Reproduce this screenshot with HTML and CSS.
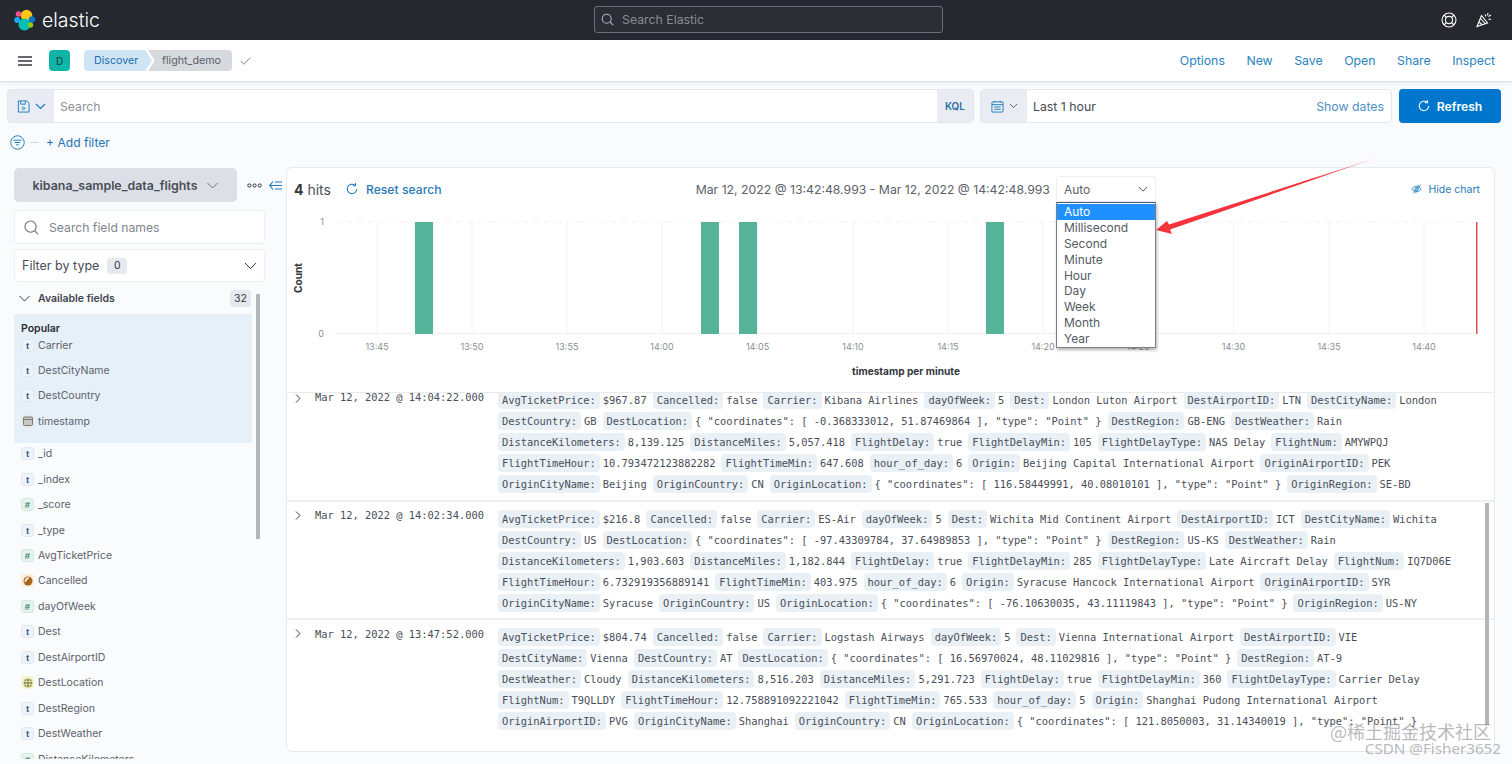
FILE: index.html
```html
<!DOCTYPE html>
<html lang="en">
<head>
<meta charset="utf-8">
<title>Discover - Elastic</title>
<link rel="stylesheet" href="styles.css">
</head>
<body>
<header class="topbar">
  <div class="brand">
    <svg class="brand-logo" width="22" height="22" viewBox="0 0 22 22">
      <circle cx="12.5" cy="6.5" r="5.8" fill="#fec514"/>
      <circle cx="10.5" cy="15.5" r="6" fill="#00bfb3"/>
      <circle cx="4.5" cy="5" r="2.8" fill="#f04e98"/>
      <circle cx="3.2" cy="11" r="3" fill="#1ba9f5"/>
      <circle cx="18" cy="10.5" r="3.2" fill="#0077cc"/>
      <circle cx="16.5" cy="16" r="2.7" fill="#93c90e"/>
    </svg>
    <span class="brand-name">elastic</span>
  </div>
  <div class="global-search">
    <svg width="13" height="13" viewBox="0 0 16 16" fill="none" stroke="#b4b8c0" stroke-width="1.3"><circle cx="7" cy="7" r="5.5"/><path d="M11 11l4 4"/></svg>
    <span>Search Elastic</span>
  </div>
  <div class="top-icons">
    <svg width="16" height="16" viewBox="0 0 16 16" fill="none" stroke="#fff" stroke-width="1.1"><circle cx="8" cy="8" r="7"/><circle cx="8" cy="8" r="3.6"/><path d="M3 3l2.5 2.5M13 3l-2.5 2.5M3 13l2.5-2.5M13 13l-2.5-2.5"/></svg>
    <svg width="16" height="16" viewBox="0 0 16 16" fill="none" stroke="#fff" stroke-width="1.1"><path d="M1 14.5L5.5 3.5l6 7.5zM3 10l3.5 3M4.500 6.500l5 5.500"/><path d="M9 2.500l1 2M12 1l-.5 2.500M15 3l-2.500 1.500M15 7.500l-2.500-.5"/></svg>
  </div>
</header>

<nav class="appbar">
  <svg class="menu-icon" width="14" height="10" viewBox="0 0 14 10"><path d="M0 1h14M0 5h14M0 9h14" stroke="#343741" stroke-width="1.500"/></svg>
  <span class="avatar">D</span>
  <div class="crumbs">
    <span class="crumb crumb-first">Discover</span>
    <span class="crumb crumb-last">flight_demo</span>
  </div>
  <svg class="check-icon" width="11" height="8" viewBox="0 0 11 8" fill="none"><path d="M.5 4l3.200 3L10.500.5" stroke="#808690"/></svg>
  <div class="app-links">
    <a>Options</a><a>New</a><a>Save</a><a>Open</a><a>Share</a><a>Inspect</a>
  </div>
</nav>

<section class="querybar">
  <div class="control query-input">
    <div class="prepend prepend-save">
      <svg width="13" height="13" viewBox="0 0 14 14" fill="none" stroke="#1a7abf"><path d="M1.500 1h9l2.500 2.500v9.500h-11.500z"/><path d="M4 1v3.500h5V1"/><circle cx="7" cy="9" r="1.300"/></svg>
      <svg width="11" height="7" viewBox="0 0 11 7" fill="none" stroke="#1a7abf" stroke-width="1.200"><path d="M1 1l4.500 4.500L10 1"/></svg>
    </div>
    <span class="placeholder">Search</span>
    <span class="kql">KQL</span>
  </div>
  <div class="control date-input">
    <div class="prepend prepend-date">
      <svg width="13" height="13" viewBox="0 0 14 14" fill="none" stroke="#1a7abf"><rect x="1" y="2" width="12" height="11" rx="1"/><path d="M1 5h12M4 1v2M10 1v2M3.500 7.500h7M3.500 10h7"/></svg>
      <svg width="9" height="6" viewBox="0 0 11 7" fill="none" stroke="#5a6069" stroke-width="1.200"><path d="M1 1l4.500 4.500L10 1"/></svg>
    </div>
    <span class="date-text">Last 1 hour</span>
    <span class="show-dates">Show dates</span>
  </div>
  <button class="refresh">
    <svg width="12" height="12" viewBox="0 0 14 14" fill="none" stroke="#fff" stroke-width="1.200"><path d="M12.500 7a5.500 5.500 0 1 1-2-4.300"/><path d="M11 0v3.200H8"/></svg>
    Refresh
  </button>
</section>

<section class="filterbar">
  <svg width="15" height="15" viewBox="0 0 16 16" fill="none" stroke="#1a7abf"><circle cx="8" cy="8" r="7.200"/><path d="M3.500 5.500h9M5 8h6M6.500 10.500h3"/></svg>
  <span class="filter-dash"></span>
  <a class="add-filter">+ Add filter</a>
</section>

<main class="layout">
  <aside class="sidebar">
    <div class="index-row">
      <button class="index-btn">kibana_sample_data_flights
        <svg width="11" height="7" viewBox="0 0 11 7" fill="none" stroke="#69707d"><path d="M.5 1l5 5 5-5"/></svg>
      </button>
      <svg class="dots" width="15" height="5" viewBox="0 0 15 5" fill="none" stroke="#343741"><circle cx="2.300" cy="2.500" r="1.600"/><circle cx="7.500" cy="2.500" r="1.600"/><circle cx="12.700" cy="2.500" r="1.600"/></svg>
      <svg class="collapse" width="13" height="9" viewBox="0 0 13 9" fill="none" stroke="#1a7abf" stroke-width="1.200"><path d="M4 .5L.8 4.500 4 8.500M1 4.500h12M6 1h7M6 8h7"/></svg>
    </div>
    <div class="field-search">
      <svg width="15" height="15" viewBox="0 0 16 16" fill="none" stroke="#69707d" stroke-width="1.200"><circle cx="7" cy="7" r="6"/><path d="M11.500 11.500l3.500 3.500"/></svg>
      <span>Search field names</span>
    </div>
    <div class="type-filter">
      <span>Filter by type</span>
      <span class="badge">0</span>
      <svg width="13" height="8" viewBox="0 0 13 8" fill="none" stroke="#343741"><path d="M1 1l5.500 5.500L12 1"/></svg>
    </div>
    <div class="avail-head">
      <svg width="11" height="7" viewBox="0 0 11 7" fill="none" stroke="#343741"><path d="M.5 1l5 5 5-5"/></svg>
      <strong>Available fields</strong>
      <span class="badge badge-count">32</span>
    </div>
    <div class="popular">
      <div class="popular-title">Popular</div>
      <div class="field"><i class="tok tok-t">t</i>Carrier</div>
      <div class="field"><i class="tok tok-t">t</i>DestCityName</div>
      <div class="field"><i class="tok tok-t">t</i>DestCountry</div>
      <div class="field"><i class="tok tok-date"><svg width="10" height="10" viewBox="0 0 10 10"><rect x=".5" y="1" width="9" height="8.500" rx="1" fill="#c8c8c4" stroke="#7a7a76"/><path d="M.5 3.500h9" stroke="#7a7a76"/></svg></i>timestamp</div>
    </div>
    <div class="fields">
      <div class="field"><i class="tok tok-t">t</i>_id</div>
      <div class="field"><i class="tok tok-t">t</i>_index</div>
      <div class="field"><i class="tok tok-n">#</i>_score</div>
      <div class="field"><i class="tok tok-t">t</i>_type</div>
      <div class="field"><i class="tok tok-n">#</i>AvgTicketPrice</div>
      <div class="field"><i class="tok tok-bool"><svg width="10" height="10" viewBox="0 0 10 10"><circle cx="5" cy="5" r="4.500" fill="#a6641f"/><path d="M1.800 6.800L6.500 1.500A4 4 0 0 0 1.800 6.800z" fill="#fbeedd"/></svg></i>Cancelled</div>
      <div class="field"><i class="tok tok-n">#</i>dayOfWeek</div>
      <div class="field"><i class="tok tok-t">t</i>Dest</div>
      <div class="field"><i class="tok tok-t">t</i>DestAirportID</div>
      <div class="field"><i class="tok tok-geo"><svg width="10" height="10" viewBox="0 0 10 10" fill="#8a8a3c" stroke="#f6f3d6" stroke-width=".7"><circle cx="5" cy="5" r="4.800"/><ellipse cx="5" cy="5" rx="2" ry="4.800"/><path d="M0 3.400h10M0 6.600h10" fill="none"/></svg></i>DestLocation</div>
      <div class="field"><i class="tok tok-t">t</i>DestRegion</div>
      <div class="field"><i class="tok tok-t">t</i>DestWeather</div>
      <div class="field"><i class="tok tok-n">#</i>DistanceKilometers</div>
    </div>
    <span class="side-scroll"></span>
  </aside>

  <section class="panel">
    <div class="hist-head">
      <div class="hits">
        <span class="hits-count"><b>4</b> hits</span>
        <a class="reset">
          <svg width="12" height="12" viewBox="0 0 14 14" fill="none" stroke="#1a7abf" stroke-width="1.200"><path d="M12.500 7a5.500 5.500 0 1 1-2-4.300"/><path d="M11 0v3.200H8"/></svg>
          Reset search
        </a>
      </div>
      <div class="range">
        <span>Mar 12, 2022 @ 13:42:48.993 - Mar 12, 2022 @ 14:42:48.993</span>
        <div class="select">
          <span>Auto</span>
          <svg width="10" height="6" viewBox="0 0 11 7" fill="none" stroke="#343741"><path d="M.5 1l5 5 5-5"/></svg>
          <ul class="options">
            <li class="on">Auto</li><li>Millisecond</li><li>Second</li><li>Minute</li><li>Hour</li><li>Day</li><li>Week</li><li>Month</li><li>Year</li>
          </ul>
        </div>
      </div>
      <a class="hide-chart">
        <svg width="11" height="10" viewBox="0 0 14 12" fill="none" stroke="#1a7abf"><path d="M1 6c3-4.500 9-4.500 12 0-3 4.500-9 4.500-12 0z"/><circle cx="7" cy="6" r="2"/><path d="M3 11.500L10 .5M5.500 11.500L12.500 .5"/></svg>
        Hide chart
      </a>
    </div>

    <svg class="chart" width="1207" height="180" viewBox="287 212 1207 180">
      <g class="grid">
        <path d="M335 222H1477" stroke-dasharray="6 5"/>
        <path d="M335 333.500H1477"/>
        <path d="M377 222V334M472 222V334M567 222V334M662 222V334M757.500 222V334M853 222V334M948 222V334M1043 222V334M1138 222V334M1233.500 222V334M1329 222V334M1424 222V334"/>
      </g>
      <g fill="#54b399">
        <rect x="415" y="222" width="18" height="112"/>
        <rect x="701" y="222" width="18" height="112"/>
        <rect x="739" y="222" width="18" height="112"/>
        <rect x="986" y="222" width="18" height="112"/>
      </g>
      <rect x="1476" y="222" width="1.500" height="112" fill="#d9534f"/>
      <g class="ticks">
        <text x="324" y="225">1</text><text x="324" y="337">0</text>
      </g>
      <g class="ticks ticks-x">
        <text x="377" y="350">13:45</text><text x="472" y="350">13:50</text><text x="567" y="350">13:55</text><text x="662" y="350">14:00</text><text x="757.500" y="350">14:05</text><text x="853" y="350">14:10</text><text x="948" y="350">14:15</text><text x="1043" y="350">14:20</text><text x="1138" y="350">14:25</text><text x="1233.500" y="350">14:30</text><text x="1329" y="350">14:35</text><text x="1424" y="350">14:40</text>
      </g>
      <text class="axis-title" x="906" y="375">timestamp per minute</text>
      <text class="axis-title" transform="translate(302 278) rotate(-90)">Count</text>
    </svg>

    <div class="docs">
      <article class="doc doc-a">
        <svg class="doc-toggle" width="6" height="9" viewBox="0 0 6 9" fill="none" stroke="#343741"><path d="M1 .5l4 4-4 4"/></svg>
        <div class="doc-time">Mar 12, 2022 @ 14:04:22.000</div>
        <div class="doc-src">
          <p><b>AvgTicketPrice:</b><span>$967.87</span><b>Cancelled:</b><span>false</span><b>Carrier:</b><span>Kibana Airlines</span><b>dayOfWeek:</b><span>5</span><b>Dest:</b><span>London Luton Airport</span><b>DestAirportID:</b><span>LTN</span><b>DestCityName:</b><span>London</span></p>
          <p><b>DestCountry:</b><span>GB</span><b>DestLocation:</b><span>{ "coordinates": [ -0.368333012, 51.87469864 ], "type": "Point" }</span><b>DestRegion:</b><span>GB-ENG</span><b>DestWeather:</b><span>Rain</span></p>
          <p><b>DistanceKilometers:</b><span>8,139.125</span><b>DistanceMiles:</b><span>5,057.418</span><b>FlightDelay:</b><span>true</span><b>FlightDelayMin:</b><span>105</span><b>FlightDelayType:</b><span>NAS Delay</span><b>FlightNum:</b><span>AMYWPQJ</span></p>
          <p><b>FlightTimeHour:</b><span>10.793472123882282</span><b>FlightTimeMin:</b><span>647.608</span><b>hour_of_day:</b><span>6</span><b>Origin:</b><span>Beijing Capital International Airport</span><b>OriginAirportID:</b><span>PEK</span></p>
          <p><b>OriginCityName:</b><span>Beijing</span><b>OriginCountry:</b><span>CN</span><b>OriginLocation:</b><span>{ "coordinates": [ 116.58449991, 40.08010101 ], "type": "Point" }</span><b>OriginRegion:</b><span>SE-BD</span></p>
        </div>
      </article>
      <article class="doc doc-b">
        <svg class="doc-toggle" width="6" height="9" viewBox="0 0 6 9" fill="none" stroke="#343741"><path d="M1 .5l4 4-4 4"/></svg>
        <div class="doc-time">Mar 12, 2022 @ 14:02:34.000</div>
        <div class="doc-src">
          <p><b>AvgTicketPrice:</b><span>$216.8</span><b>Cancelled:</b><span>false</span><b>Carrier:</b><span>ES-Air</span><b>dayOfWeek:</b><span>5</span><b>Dest:</b><span>Wichita Mid Continent Airport</span><b>DestAirportID:</b><span>ICT</span><b>DestCityName:</b><span>Wichita</span></p>
          <p><b>DestCountry:</b><span>US</span><b>DestLocation:</b><span>{ "coordinates": [ -97.43309784, 37.64989853 ], "type": "Point" }</span><b>DestRegion:</b><span>US-KS</span><b>DestWeather:</b><span>Rain</span></p>
          <p><b>DistanceKilometers:</b><span>1,903.603</span><b>DistanceMiles:</b><span>1,182.844</span><b>FlightDelay:</b><span>true</span><b>FlightDelayMin:</b><span>285</span><b>FlightDelayType:</b><span>Late Aircraft Delay</span><b>FlightNum:</b><span>IQ7D06E</span></p>
          <p><b>FlightTimeHour:</b><span>6.732919356889141</span><b>FlightTimeMin:</b><span>403.975</span><b>hour_of_day:</b><span>6</span><b>Origin:</b><span>Syracuse Hancock International Airport</span><b>OriginAirportID:</b><span>SYR</span></p>
          <p><b>OriginCityName:</b><span>Syracuse</span><b>OriginCountry:</b><span>US</span><b>OriginLocation:</b><span>{ "coordinates": [ -76.10630035, 43.11119843 ], "type": "Point" }</span><b>OriginRegion:</b><span>US-NY</span></p>
        </div>
      </article>
      <article class="doc doc-c">
        <svg class="doc-toggle" width="6" height="9" viewBox="0 0 6 9" fill="none" stroke="#343741"><path d="M1 .5l4 4-4 4"/></svg>
        <div class="doc-time">Mar 12, 2022 @ 13:47:52.000</div>
        <div class="doc-src">
          <p><b>AvgTicketPrice:</b><span>$804.74</span><b>Cancelled:</b><span>false</span><b>Carrier:</b><span>Logstash Airways</span><b>dayOfWeek:</b><span>5</span><b>Dest:</b><span>Vienna International Airport</span><b>DestAirportID:</b><span>VIE</span></p>
          <p><b>DestCityName:</b><span>Vienna</span><b>DestCountry:</b><span>AT</span><b>DestLocation:</b><span>{ "coordinates": [ 16.56970024, 48.11029816 ], "type": "Point" }</span><b>DestRegion:</b><span>AT-9</span></p>
          <p><b>DestWeather:</b><span>Cloudy</span><b>DistanceKilometers:</b><span>8,516.203</span><b>DistanceMiles:</b><span>5,291.723</span><b>FlightDelay:</b><span>true</span><b>FlightDelayMin:</b><span>360</span><b>FlightDelayType:</b><span>Carrier Delay</span></p>
          <p><b>FlightNum:</b><span>T9QLLDY</span><b>FlightTimeHour:</b><span>12.758891092221042</span><b>FlightTimeMin:</b><span>765.533</span><b>hour_of_day:</b><span>5</span><b>Origin:</b><span>Shanghai Pudong International Airport</span></p>
          <p><b>OriginAirportID:</b><span>PVG</span><b>OriginCityName:</b><span>Shanghai</span><b>OriginCountry:</b><span>CN</span><b>OriginLocation:</b><span>{ "coordinates": [ 121.8050003, 31.14340019 ], "type": "Point" }</span></p>
        </div>
      </article>
    </div>
    <span class="doc-scroll"></span>
  </section>
</main>

<svg class="arrow" width="240" height="90" viewBox="1150 150 240 90">
  <defs><linearGradient id="arrowFade" x1="1" y1="0" x2="0" y2="1"><stop offset="0" stop-color="#f4333c" stop-opacity=".1"/><stop offset=".3" stop-color="#f4333c"/></linearGradient></defs>
  <polygon fill="url(#arrowFade)" points="1382,156 1170,229.500 1172,234 1156,230 1167,221 1169,224.500"/>
</svg>

<div class="watermark">
  <div class="wm-cn">@稀土掘金技术社区</div>
  <div class="wm-en">CSDN @Fisher3652</div>
</div>
</body>
</html>
```
FILE: styles.css
```css
* { box-sizing: border-box; }
html, body { margin: 0; height: 764px; overflow: hidden; }
body {
  position: relative;
  background: #fafbfd;
  color: #343741;
  font-family: Inter, "Noto Sans", sans-serif;
  font-size: 13px;
}
a { color: #1a7abf; }

/* top bar */
.topbar {
  height: 40px;
  background: #25282f;
  display: grid;
  grid-template-columns: 580px 349px 1fr;
  align-items: center;
  padding: 0 20px 0 14px;
}
.brand { display: flex; align-items: center; gap: 6px; }
.brand-logo { flex: none; }
.brand-name { color: #fff; font-size: 19.500px; font-weight: 300; }
.global-search {
  height: 27px;
  border: 1px solid #6a6e76;
  border-radius: 3px;
  background: #2b2e35;
  display: flex;
  align-items: center;
  gap: 8px;
  padding: 0 6px;
  color: #888c94;
  font-size: 12.300px;
  position: relative;
  top: -1px;
}
.top-icons { display: flex; justify-content: flex-end; gap: 19px; }

/* app bar */
.appbar {
  height: 42px;
  background: #fff;
  border-bottom: 1px solid #dcdfe4;
  box-shadow: 0 1px 3px rgba(0,0,0,.08);
  display: flex;
  align-items: center;
  padding: 0 17px 0 18px;
}
.avatar {
  width: 21px; height: 21px;
  margin-left: 17px;
  border-radius: 4px;
  background: #0fb5a8;
  color: #124e4a;
  font-size: 10px;
  font-weight: 500;
  display: flex; align-items: center; justify-content: center;
}
.crumbs { display: flex; margin-left: 14px; }
.crumb {
  height: 21px;
  display: flex; align-items: center;
  font-size: 10.700px;
}
.crumb-first {
  width: 68px;
  padding-left: 10px;
  background: #cfe5f5;
  color: #1a6fae;
  border-radius: 4px 0 0 4px;
  clip-path: polygon(0 0, 90% 0, 100% 50%, 90% 100%, 0 100%);
  position: relative;
  z-index: 1;
}
.crumb-last {
  width: 84px;
  margin-left: -4px;
  padding-left: 14px;
  background: #d6d9de;
  color: #5a5f68;
  border-radius: 0 4px 4px 0;
  clip-path: polygon(0 0, 100% 0, 100% 100%, 0 100%, 8% 50%);
}
.check-icon { margin-left: 8px; }
.app-links { margin-left: auto; display: flex; gap: 21.500px; font-size: 12.300px; }
.app-links a { color: #2a82c2; }

/* query bar */
.querybar {
  margin-top: 7px;
  height: 34px;
  padding: 0 11px 0 7px;
  display: flex;
}
.control {
  background: #fff;
  border: 1px solid #e3e6ec;
  border-radius: 4px;
  display: flex;
  align-items: center;
  overflow: hidden;
}
.query-input { width: 967px; }
.date-input { width: 412px; margin-left: 6px; }
.prepend {
  height: 100%;
  background: #e9edf3;
  display: flex;
  align-items: center;
  justify-content: center;
  gap: 5px;
  flex: none;
  width: 46px;
}
.placeholder { margin-left: 6px; color: #8c9099; font-size: 12.200px; }
.kql {
  margin-left: auto;
  width: 36px;
  height: 100%;
  background: #e9edf3;
  color: #2a72a8;
  font-size: 10px;
  font-weight: 600;
  display: flex; align-items: center; justify-content: center;
}
.date-text { margin-left: 6px; font-size: 12.300px; color: #454a54; }
.show-dates { margin-left: auto; margin-right: 7px; color: #4f8fc4; font-size: 12.300px; }
.refresh {
  width: 102px;
  margin-left: 7px;
  background: #0077cc;
  border: 0;
  border-radius: 4px;
  color: #fff;
  font: 600 12.200px Inter, sans-serif;
  display: flex; align-items: center; justify-content: center;
  gap: 7px;
}

/* filter bar */
.filterbar {
  height: 38px;
  padding-left: 10px;
  display: flex;
  align-items: center;
}
.filter-dash { width: 8px; height: 1px; margin-left: 5px; background: #d3d6db; }
.add-filter { margin-left: 8px; font-size: 12.100px; color: #2274b5; }

/* layout */
.layout {
  margin-top: 6px;
  display: flex;
  align-items: flex-start;
}
.sidebar {
  position: relative;
  width: 286px;
  height: 592px;
  padding: 1px 21px 0 14px;
  overflow: hidden;
  flex: none;
}
.index-row { display: flex; align-items: center; width: 270px; }
.index-btn {
  width: 223px; height: 34px;
  border: 0;
  border-radius: 5px;
  background: #dcdfe5;
  color: #4a4e58;
  font: 600 12.400px Inter, sans-serif;
  display: flex; align-items: center; justify-content: center;
  gap: 10px;
}
.dots { margin-left: 10px; }
.collapse { margin-left: 7px; }
.field-search, .type-filter {
  background: #fff;
  border: 1px solid #eceef2;
  border-radius: 4px;
  display: flex;
  align-items: center;
  font-size: 12.500px;
}
.field-search {
  height: 34px;
  margin-top: 8px;
  padding-left: 9px;
  gap: 10px;
  color: #80858e;
  font-size: 12.200px;
}
.type-filter {
  height: 33px;
  margin-top: 5px;
  padding: 0 7px;
  color: #4a4e58;
}
.type-filter svg { margin-left: auto; }
.badge {
  background: #e6e9ef;
  border-radius: 3px;
  font-size: 10.500px;
  color: #343741;
  display: flex; align-items: center; justify-content: center;
}
.type-filter .badge { width: 20px; height: 16px; margin-left: 8px; }
.avail-head {
  height: 17px;
  margin-top: 8px;
  padding-left: 5px;
  display: flex;
  align-items: center;
  font-size: 10.500px;
  width: 237px;
}
.avail-head strong { margin-left: 8px; font-weight: 600; color: #40444d; }
.badge-count { margin-left: auto; width: 21px; height: 17px; }
.popular {
  width: 238px;
  margin-top: 7px;
  padding: 8px 0 3px 7px;
  background: #e6f0f9;
}
.popular-title {
  height: 14px;
  margin-bottom: 2px;
  font-size: 10.500px;
  font-weight: 600;
  line-height: 14px;
  color: #2b2e35;
}
.fields { margin-top: 4px; padding-left: 7px; }
.field {
  height: 14px;
  margin-bottom: 11.450px;
  display: flex;
  align-items: center;
  gap: 4px;
  font-size: 10.500px;
  color: #5c616b;
  white-space: nowrap;
}
.tok {
  flex: none;
  width: 13px; height: 13px;
  border-radius: 3px;
  display: flex; align-items: center; justify-content: center;
  font: 700 9.500px "Liberation Sans", sans-serif;
}
.tok-t { background: #eef3fa; border: 1px solid #dfe8f3; color: #2d5c88; }
.tok-n { background: #e4f3ee; border: 1px solid #d4e9e2; color: #2e7d68; }
.tok-bool { background: #fbeedd; }
.tok-geo { background: #f6f3d6; }
.tok-date { background: #e9e9e6; }
.side-scroll {
  position: absolute;
  left: 256px; top: 127px;
  width: 4px; height: 245px;
  background: #b3b5ba;
}

/* panel */
.panel {
  position: relative;
  width: 1209px;
  height: 585px;
  background: #fff;
  border: 1px solid #e6e9ee;
  border-radius: 6px;
  overflow: hidden;
}
.hist-head {
  height: 44px;
  padding: 0 14px 2px 7px;
  display: flex;
  align-items: center;
  justify-content: space-between;
  position: relative;
  z-index: 2;
}
.hits { display: flex; align-items: center; gap: 15px; }
.hits-count { font-size: 14px; color: #4a4e58; }
.hits-count b { font-weight: 700; color: #343741; }
.reset { display: flex; align-items: center; gap: 8px; font-size: 12.200px; color: #2a7ab8; font-weight: 500; }
.range { display: flex; align-items: center; gap: 6px; font-size: 12.250px; color: #5c616b; }
.select {
  position: relative;
  width: 100px; height: 26px;
  background: #fff;
  border: 1px solid #eceef2;
  border-radius: 3px;
  padding: 0 7px;
  display: flex; align-items: center; justify-content: space-between;
  font-size: 12px;
  color: #5c616b;
}
.options {
  position: absolute;
  left: -1px; top: 25px;
  width: 100px;
  margin: 0;
  padding: 1px 0 0;
  list-style: none;
  background: #fff;
  border: 1px solid #7d8087;
  border-top: 1px solid #3f5d7a;
  box-shadow: 1px 2px 3px rgba(0,0,0,.3);
}
.options li {
  height: 15.900px;
  padding-left: 7px;
  line-height: 16px;
  font-size: 12px;
  color: #555a63;
}
.options .on { background: #1e90ff; color: #fff; }
.hide-chart {
  display: flex;
  align-items: center;
  justify-content: flex-end;
  min-width: 70px;
  gap: 6px;
  font-size: 10.500px;
  color: #2a7ab8;
}

/* chart */
.chart { display: block; }
.grid path { fill: none; stroke: #f1f2f5; }
.ticks text { font-size: 9px; fill: #8b8f96; text-anchor: end; }
.ticks-x text { text-anchor: middle; }
.axis-title { font-size: 10.100px; font-weight: 700; fill: #343741; text-anchor: middle; }

/* docs */
.docs {
  height: 360px;
  border-top: 1px solid #e8eaee;
  overflow: hidden;
}
.doc {
  position: relative;
  display: grid;
  grid-template-columns: 183px 1fr;
  padding-left: 28px;
  border-bottom: 2px solid #eef0f3;
}
.doc-a { padding-top: 0; padding-bottom: 6px; margin-top: -3px; height: 112px; }
.doc-b { padding-top: 7px; height: 118px; }
.doc-c { padding-top: 7px; border-bottom: 0; }
.doc-toggle { position: absolute; left: 8px; top: 4px; }
.doc-b .doc-toggle, .doc-c .doc-toggle { top: 9px; }
.doc-time, .doc-src {
  font-family: "DejaVu Sans Mono", "Liberation Mono", monospace;
  font-size: 10.400px;
  color: #4a4e58;
}
.doc-time { line-height: 12px; padding-top: 1px; }
.doc-b .doc-time { padding-top: 0; }
.doc-c .doc-time { padding-top: 1px; }
.doc-src p { margin: 0; height: 21px; line-height: 21px; white-space: nowrap; }
.doc-src b {
  font-weight: 400;
  display: inline-block;
  height: 18px;
  line-height: 18px;
  padding: 0 4px;
  margin-right: 3px;
  background: #e9f0f6;
  border-radius: 4px;
  color: #4a4e58;
}
.doc-src span { margin-right: 6px; }
.doc-scroll {
  position: absolute;
  right: 5px; top: 335px;
  width: 4px; height: 222px;
  background: #b3b5ba;
}

/* overlays */
.arrow { position: absolute; left: 1150px; top: 150px; z-index: 5; }
.watermark {
  position: absolute;
  right: 11px; top: 722px;
  z-index: 6;
  text-align: right;
  line-height: 1;
  font-family: "Noto Sans", "Noto Sans CJK SC", sans-serif;
  color: rgba(120,125,132,.55);
}
.wm-cn { font-family: "Noto Sans CJK SC", sans-serif; font-size: 18px; margin-right: 10px; }
.wm-en { font-size: 15.200px; margin-top: 1px; }
```
